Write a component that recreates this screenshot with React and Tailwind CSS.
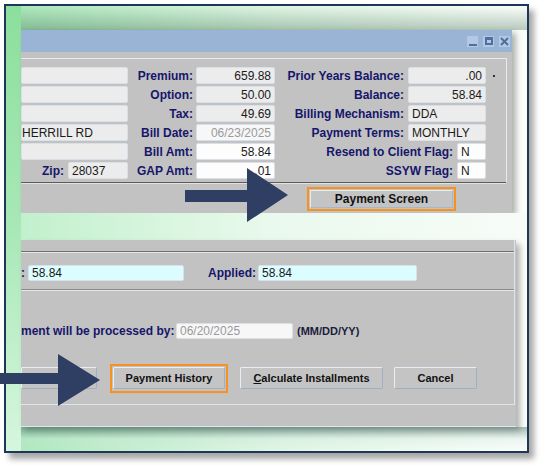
import React from "react";

const font = { fontFamily: '"Liberation Sans", Arial, sans-serif' };

function Field({ w, value = "", align = "right", tone = "gray", tight = false, className = "" }) {
  const tones = {
    gray: "bg-[#ececec] text-[#1a1a1a]",
    white: "bg-[#fdfdfd] text-[#1a1a1a]",
    disabled: "bg-[#f7f7f7] text-[#9a9a9a]",
    cyan: "bg-[#dcfdff] text-[#1a1a1a]",
  };
  return (
    <div
      className={`h-full border border-[#d9e0e8] rounded-[2px] flex items-center text-[12px] leading-none ${
        tight ? "pl-0 pr-[3px]" : "px-[3px]"
      } ${align === "right" ? "justify-end" : "justify-start"} ${tones[tone]} ${className}`}
      style={{ width: w }}
    >
      {value}
    </div>
  );
}

function Label({ children, className = "" }) {
  return <span className={`text-[12px] font-bold text-[#16166b] leading-none whitespace-nowrap ${className}`}>{children}</span>;
}

function Row({ a, b, c }) {
  return (
    <div className="flex h-[17px]">
      <div className="w-[107px] h-full flex justify-end items-center gap-[3px]">{a}</div>
      <div className="w-[147px] h-full flex justify-end items-center gap-[3px]">
        <Label>{b.label}</Label>
        <Field w={79} value={b.value} tone={b.tone || "gray"} />
      </div>
      <div className="w-[211px] h-full flex justify-end items-center gap-[4px]">
        <Label>{c.label}</Label>
        <Field w={c.w || 78} value={c.value} align={c.align || "right"} tone={c.tone || "gray"} />
      </div>
      {c.dot && <div className="w-[2px] h-[2px] bg-[#333] ml-[7px] mt-[1px] self-center" />}
    </div>
  );
}

function WinButton({ children, w }) {
  return (
    <div
      className="h-[22px] bg-[#c4c4c4] border border-[#9fb0c4] border-t-[#e8eef5] border-l-[#e8eef5] rounded-[2px] flex items-center justify-center text-[11px] font-bold text-[#111]"
      style={{ width: w }}
    >
      {children}
    </div>
  );
}

function TitleIcons() {
  return (
    <div className="flex gap-[5px] mr-[2px]">
      <div className="w-[11px] h-[11px] bg-[#b3c8e2] flex items-end justify-center pb-[1px]">
        <div className="w-[8px] h-[2px] bg-[#4f6f9e]" />
      </div>
      <div className="w-[11px] h-[11px] bg-[#b3c8e2] flex items-center justify-center">
        <div className="w-[8px] h-[8px] border-2 border-[#4f6f9e] border-t-[3px]" />
      </div>
      <div className="w-[11px] h-[11px] bg-[#b3c8e2] flex items-center justify-center">
        <svg width="9" height="9" viewBox="0 0 9 9">
          <path d="M1 1 L8 8 M8 1 L1 8" stroke="#4f6f9e" strokeWidth="2" />
        </svg>
      </div>
    </div>
  );
}

export default function App() {
  return (
    <div className="w-[543px] h-[471px] bg-white relative pt-[4px] pl-[4px] overflow-hidden" style={font}>
      <div className="w-[525px] h-[449px] border-2 border-[#1e3658] flex overflow-hidden shadow-[5px_6px_6px_rgba(0,0,0,0.35)]">
        {/* left strip */}
        <div className="w-[15px] h-full bg-gradient-to-b from-[#8cdf9d] via-[#a8e8b7] to-[#d6f6de]" />

        <div className="flex-1 h-full flex flex-col bg-gradient-to-r from-[#aee9bd] via-[#e0f6e5] to-[#fbfefb]">
          {/* top gap */}
          <div className="h-[24px] bg-gradient-to-b from-transparent to-[rgba(30,80,50,0.3)]" />

          {/* top window */}
          <div className="flex h-[183px]">
            <div className="w-[491px] h-full bg-[#c2c2c2] flex flex-col shadow-[4px_3px_6px_rgba(0,0,0,0.3)]">
              <div className="h-[22px] bg-[#9ab4d5] flex items-center justify-end">
                <TitleIcons />
              </div>
              <div className="pt-[6px]">
                <div className="w-[486px] border-t border-r border-[#e4eaf2] pt-[8px] pb-[3px] flex flex-col gap-[2px]">
                  <Row
                    a={<Field w={107} tone="gray" />}
                    b={{ label: "Premium:", value: "659.88" }}
                    c={{ label: "Prior Years Balance:", value: ".00", dot: true }}
                  />
                  <Row
                    a={<Field w={107} tone="gray" />}
                    b={{ label: "Option:", value: "50.00" }}
                    c={{ label: "Balance:", value: "58.84" }}
                  />
                  <Row
                    a={<Field w={107} tone="gray" />}
                    b={{ label: "Tax:", value: "49.69" }}
                    c={{ label: "Billing Mechanism:", value: "DDA", align: "left" }}
                  />
                  <Row
                    a={<Field w={107} tone="gray" align="left" value="HERRILL RD" tight />}
                    b={{ label: "Bill Date:", value: "06/23/2025", tone: "disabled" }}
                    c={{ label: "Payment Terms:", value: "MONTHLY", align: "left" }}
                  />
                  <Row
                    a={<Field w={107} tone="gray" />}
                    b={{ label: "Bill Amt:", value: "58.84", tone: "white" }}
                    c={{ label: "Resend to Client Flag:", value: "N", w: 29, align: "left", tone: "white" }}
                  />
                  <Row
                    a={
                      <>
                        <Label className="mr-[1px]">Zip:</Label>
                        <Field w={60} tone="gray" align="left" value="28037" />
                      </>
                    }
                    b={{ label: "GAP Amt:", value: ".01", tone: "white" }}
                    c={{ label: "SSYW Flag:", value: "N", w: 29, align: "left", tone: "white" }}
                  />
                </div>
                <div className="w-[485px] h-[2px] border-t border-[#5c5c5c] border-b border-b-[#e2e2e2]" />
                <div className="h-[29px] flex items-center pl-[286px]">
                  <div className="w-[149px] h-[24px] border-2 border-[#f7921e] p-[1px]">
                    <div className="w-full h-full bg-[#c4c4c4] border border-[#a9b6c6] border-t-[#e6ecf3] border-l-[#e6ecf3] flex items-center justify-center text-[12px] font-bold text-[#111]">
                      Payment Screen
                    </div>
                  </div>
                </div>
              </div>
            </div>
          </div>

          {/* band */}
          <div className="h-[27px] bg-gradient-to-r from-[#c2f0cd] via-[#eaf9ed] to-[#f7fcf8]" />

          {/* bottom window */}
          <div className="flex h-[187px]">
            <div className="w-[495px] h-full bg-[#c2c2c2] flex flex-col border-b border-[#dfe6ef] shadow-[4px_4px_6px_rgba(0,0,0,0.3)]">
              <div className="h-[165px] w-[494px] border-r border-b border-[#dce4ee] pt-[11px] flex flex-col">
                <div className="h-[2px] border-t border-[#707070] border-b border-b-[#e6e6e6]" />
                <div className="h-[16px] mt-[12px] flex items-center">
                  <Label className="text-[11px] w-[7px]">:</Label>
                  <Field w={156} value="58.84" align="left" tone="cyan" className="text-[11px] border-[#b9d2de]" />
                  <Label className="text-[11px] ml-[24px] w-[50px]">Applied:</Label>
                  <Field w={159} value="58.84" align="left" tone="cyan" className="text-[11px] border-[#b9d2de]" />
                </div>
                <div className="h-[2px] mt-[8px] border-t border-[#8a8a8a] border-b border-b-[#e6e6e6]" />
                <div className="h-[16px] mt-[32px] flex items-center">
                  <Label className="text-[11px] w-[155px]">ment will be processed by:</Label>
                  <Field w={117} value="06/20/2025" align="left" tone="disabled" className="text-[11px]" />
                  <span className="ml-[4px] text-[11px] font-bold text-[#1c1c3c] leading-none">(MM/DD/YY)</span>
                </div>
                <div className="h-[22px] mt-[28px] flex items-center">
                  <WinButton w={76}>Print</WinButton>
                  <div className="ml-[13px] w-[118px] h-[29px] border-2 border-[#f7921e] p-[1px] flex items-center">
                    <WinButton w={112}>Payment History</WinButton>
                  </div>
                  <div className="ml-[12px]">
                    <WinButton w={143}>
                      <span className="underline">C</span>alculate Installments
                    </WinButton>
                  </div>
                  <div className="ml-[11px]">
                    <WinButton w={83}>Cancel</WinButton>
                  </div>
                </div>
              </div>
            </div>
          </div>

          {/* bottom gap */}
          <div className="flex-1 bg-gradient-to-b from-[rgba(60,105,95,0.45)] via-[rgba(200,225,215,0.3)] to-transparent" />
        </div>
      </div>

      {/* arrows */}
      <svg className="absolute left-[180px] top-[164px]" width="112" height="62" viewBox="0 0 112 62">
        <polygon points="5,26 67,26 67,4 108,31 67,58 67,38 5,38" fill="#2f3e63" />
      </svg>
      <svg className="absolute left-[0px] top-[350px]" width="104" height="60" viewBox="0 0 104 60">
        <polygon points="0,23 58,23 58,4 100,30 58,56 58,34 0,34" fill="#2f3e63" />
      </svg>
    </div>
  );
}
